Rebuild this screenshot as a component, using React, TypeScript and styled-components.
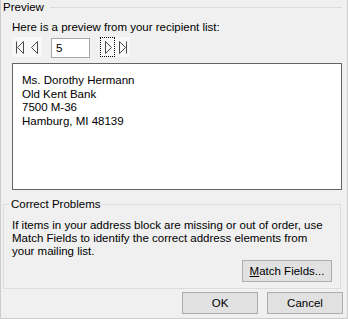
import React from "react";
import styled, { createGlobalStyle } from "styled-components";

const Global = createGlobalStyle`
  html, body { margin: 0; padding: 0; background: #f0f0f0; }
  body { font-family: "Liberation Sans", Arial, sans-serif; font-size: 11.5px; color: #000; }
`;

const Window = styled.div`
  box-sizing: border-box;
  width: 348px;
  height: 319px;
  background: #f0f0f0;
  border: 1px solid #cccccc;
  border-top: none;
  display: flex;
  flex-direction: column;
`;

const SectionHeader = styled.div`
  display: flex;
  align-items: center;
  height: 14px;
  margin-left: 2px;
  margin-right: 5px;
`;

const HeaderLabel = styled.span`
  line-height: 14px;
`;

const HeaderLine = styled.div`
  flex: 1;
  height: 1px;
  background: #dcdcdc;
  margin-left: 6px;
`;

const PreviewBody = styled.div`
  display: flex;
  flex-direction: column;
  padding-left: 11px;
`;

const Text = styled.div<{ $mt?: number }>`
  line-height: 14px;
  margin-top: ${(p) => p.$mt ?? 0}px;
  white-space: nowrap;
`;

const NavRow = styled.div`
  display: flex;
  align-items: flex-start;
  margin-top: 3px;
  height: 20px;
`;

const NavGroup = styled.div<{ $ml?: number }>`
  display: flex;
  background: #f8f8f8;
  margin-left: ${(p) => p.$ml ?? 0}px;
`;

const NavButton = styled.div<{ $focus?: boolean }>`
  box-sizing: border-box;
  width: 15px;
  height: 20px;
  display: flex;
  align-items: center;
  justify-content: center;
  border: 1px dotted ${(p) => (p.$focus ? "#000" : "transparent")};
`;

const RecordInput = styled.div`
  box-sizing: border-box;
  width: 39px;
  height: 20px;
  margin-top: 1px;
  margin-left: 9px;
  background: #fff;
  border: 1px solid #a6a6a6;
  padding-left: 4px;
  line-height: 18px;
`;

const AddressBox = styled.div`
  box-sizing: border-box;
  width: 330px;
  height: 127px;
  margin-top: 6px;
  background: #fff;
  border: 1px solid #646464;
  padding: 10px 0 0 9px;
`;

const AddressLine = styled.div`
  line-height: 13.7px;
  white-space: nowrap;
`;

const GroupBox = styled.div`
  position: relative;
  box-sizing: border-box;
  width: 338px;
  height: 85px;
  margin-top: 14px;
  margin-left: 2px;
  border: 1px solid #dcdcdc;
  padding: 14px 0 0 8px;
  display: flex;
  flex-direction: column;
`;

const Legend = styled.span`
  position: absolute;
  top: -8px;
  left: 5px;
  padding: 0 2px;
  background: #f0f0f0;
  line-height: 14px;
`;

const Para = styled.div`
  line-height: 13px;
  white-space: nowrap;
`;

const Button = styled.div<{ $w: number }>`
  box-sizing: border-box;
  width: ${(p) => p.$w}px;
  height: 22px;
  background: #e1e1e1;
  border: 1px solid #adadad;
  display: flex;
  align-items: center;
  justify-content: center;
  line-height: 14px;
`;

const GroupButtonRow = styled.div`
  display: flex;
  justify-content: flex-end;
  margin-top: 2px;
  padding-right: 8px;
`;

const FooterRow = styled.div`
  display: flex;
  justify-content: flex-end;
  gap: 9px;
  margin-top: 3px;
  margin-right: 4px;
`;

const U = styled.span`
  text-decoration: underline;
`;

const stroke = "#4a4a4a";

const First = () => (
  <svg width="10" height="13" viewBox="0 0 10 13">
    <line x1="1.5" y1="0.5" x2="1.5" y2="12.5" stroke={stroke} />
    <polygon points="8.5,0.5 2.5,6.5 8.5,12.5" fill="none" stroke={stroke} />
  </svg>
);
const Prev = () => (
  <svg width="8" height="13" viewBox="0 0 8 13">
    <polygon points="6.5,0.5 0.5,6.5 6.5,12.5" fill="none" stroke={stroke} />
  </svg>
);
const Next = () => (
  <svg width="8" height="13" viewBox="0 0 8 13">
    <polygon points="1.5,0.5 7.5,6.5 1.5,12.5" fill="none" stroke={stroke} />
  </svg>
);
const Last = () => (
  <svg width="10" height="13" viewBox="0 0 10 13">
    <polygon points="1.5,0.5 7.5,6.5 1.5,12.5" fill="none" stroke={stroke} />
    <line x1="8.5" y1="0.5" x2="8.5" y2="12.5" stroke={stroke} />
  </svg>
);

export default function App() {
  return (
    <>
      <Global />
      <Window>
        <SectionHeader>
          <HeaderLabel>Preview</HeaderLabel>
          <HeaderLine />
        </SectionHeader>
        <PreviewBody>
          <Text $mt={6}>Here is a preview from your recipient list:</Text>
          <NavRow>
            <NavGroup>
              <NavButton><First /></NavButton>
              <NavButton><Prev /></NavButton>
            </NavGroup>
            <RecordInput>5</RecordInput>
            <NavGroup $ml={10}>
              <NavButton $focus><Next /></NavButton>
              <NavButton><Last /></NavButton>
            </NavGroup>
          </NavRow>
          <AddressBox>
            <AddressLine>Ms. Dorothy Hermann</AddressLine>
            <AddressLine>Old Kent Bank</AddressLine>
            <AddressLine>7500 M-36</AddressLine>
            <AddressLine>Hamburg, MI 48139</AddressLine>
          </AddressBox>
        </PreviewBody>
        <GroupBox>
          <Legend>Correct Problems</Legend>
          <Para>If items in your address block are missing or out of order, use</Para>
          <Para>Match Fields to identify the correct address elements from</Para>
          <Para>your mailing list.</Para>
          <GroupButtonRow>
            <Button $w={90}><span><U>M</U>atch Fields...</span></Button>
          </GroupButtonRow>
        </GroupBox>
        <FooterRow>
          <Button $w={76}>OK</Button>
          <Button $w={76}>Cancel</Button>
        </FooterRow>
      </Window>
    </>
  );
}
